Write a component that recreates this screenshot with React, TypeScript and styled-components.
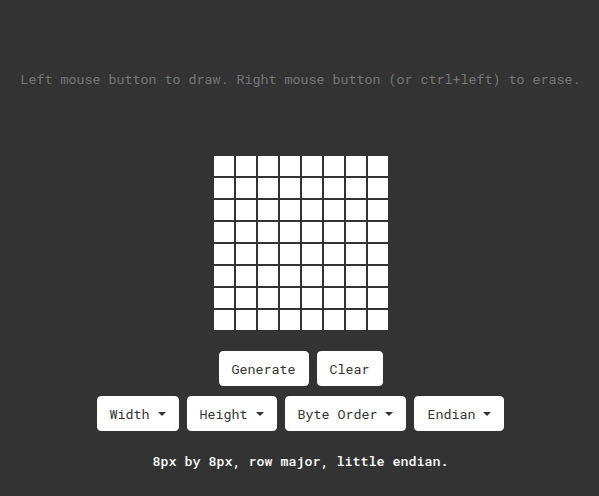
import React from "react";
import styled, { createGlobalStyle } from "styled-components";

const Global = createGlobalStyle`
  html, body {
    margin: 0;
    padding: 0;
    background: #333333;
  }
  body {
    font-family: "Roboto Mono", "DejaVu Sans Mono", "Liberation Mono", monospace;
    font-size: 13.33px;
  }
`;

const Page = styled.div`
  display: flex;
  flex-direction: column;
  align-items: center;
  padding-top: 70px;
  padding-left: 2px;
  min-height: 496px;
  box-sizing: border-box;
`;

const Hint = styled.p`
  margin: 0;
  color: #767676;
  line-height: 18px;
  white-space: nowrap;
`;

const Grid = styled.div`
  margin-top: 68px;
  display: grid;
  grid-template-columns: repeat(8, 20px);
  grid-auto-rows: 20px;
  gap: 2px;
`;

const Cell = styled.div<{ $on?: boolean }>`
  background: ${(p) => (p.$on ? "#333333" : "#ffffff")};
  cursor: pointer;
`;

const Row = styled.div<{ $top: number }>`
  display: flex;
  gap: 8px;
  margin-top: ${(p) => p.$top}px;
`;

const Button = styled.button`
  height: 35px;
  padding: 0 12px;
  border: 1px solid #ffffff;
  border-radius: 4px;
  background: #ffffff;
  color: #333333;
  font-family: inherit;
  font-size: 13.33px;
  display: flex;
  align-items: center;
  cursor: pointer;
`;

const Caret = styled.span`
  display: inline-block;
  width: 0;
  height: 0;
  margin-left: 8px;
  border-top: 4px solid #333333;
  border-left: 4px solid transparent;
  border-right: 4px solid transparent;
`;

const Summary = styled.p`
  margin: 21px 0 0;
  color: #ffffff;
  font-weight: 500;
  line-height: 18px;
`;

const Dropdown = ({ label }: { label: string }) => (
  <Button>
    {label}
    <Caret />
  </Button>
);

export default function App() {
  const cells = Array.from({ length: 64 }, (_, i) => i);
  return (
    <>
      <Global />
      <Page>
        <Hint>Left mouse button to draw. Right mouse button (or ctrl+left) to erase.</Hint>
        <Grid>
          {cells.map((i) => (
            <Cell key={i} />
          ))}
        </Grid>
        <Row $top={21}>
          <Button>Generate</Button>
          <Button>Clear</Button>
        </Row>
        <Row $top={10}>
          <Dropdown label="Width" />
          <Dropdown label="Height" />
          <Dropdown label="Byte Order" />
          <Dropdown label="Endian" />
        </Row>
        <Summary>8px by 8px, row major, little endian.</Summary>
      </Page>
    </>
  );
}
